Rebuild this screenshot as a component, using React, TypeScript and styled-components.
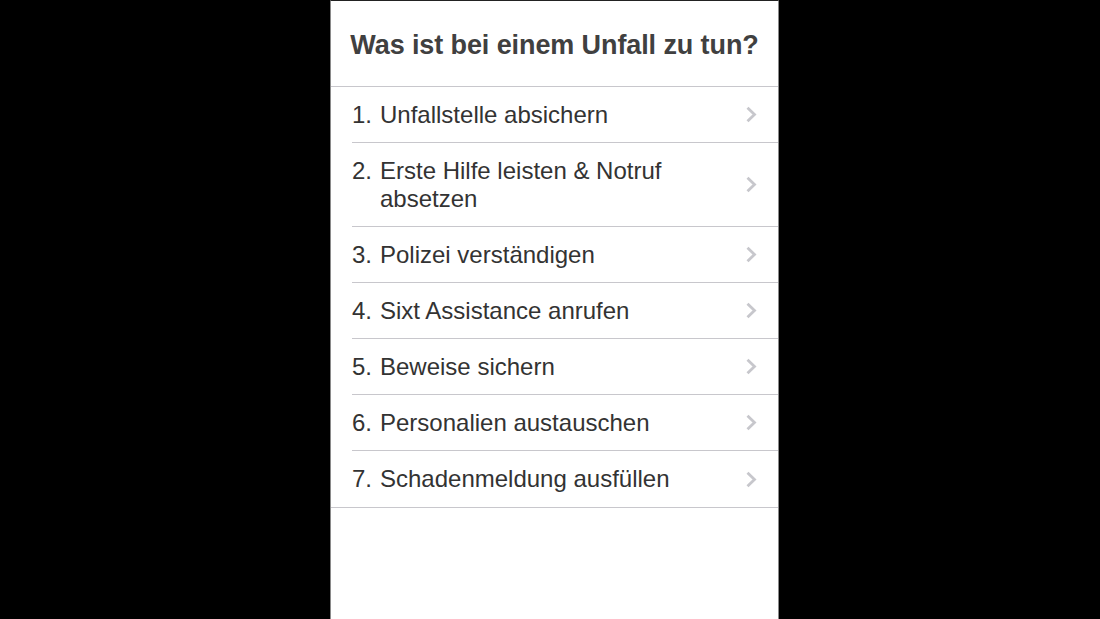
import React from "react";
import styled, { createGlobalStyle } from "styled-components";

const GlobalStyle = createGlobalStyle`
  html, body {
    margin: 0;
    padding: 0;
    background: #000;
    height: 100%;
  }
  #root {
    height: 100%;
  }
`;

const steps = [
  "Unfallstelle absichern",
  "Erste Hilfe leisten & Notruf absetzen",
  "Polizei verständigen",
  "Sixt Assistance anrufen",
  "Beweise sichern",
  "Personalien austauschen",
  "Schadenmeldung ausfüllen",
];

const Stage = styled.div`
  height: 619px;
  display: flex;
  padding-left: 330px;
  background: #000;
`;

const Phone = styled.div`
  width: 449px;
  height: 100%;
  background: #fff;
  border-left: 1px solid #8a8a8a;
  border-right: 1px solid #8a8a8a;
  border-top: 1px solid #222;
  box-sizing: border-box;
  font-family: "Liberation Sans", Arial, sans-serif;
  color: #333;
`;

const Header = styled.h1`
  margin: 0;
  height: 86px;
  padding-top: 3px;
  box-sizing: border-box;
  display: flex;
  align-items: center;
  justify-content: center;
  font-size: 27px;
  font-weight: 700;
  color: #404040;
  border-bottom: 1px solid #c8c7cc;
  letter-spacing: -0.1px;
`;

const List = styled.ul`
  list-style: none;
  margin: 0;
  padding: 0 0 0 21px;
  border-bottom: 1px solid #c8c7cc;
`;

const Row = styled.li<{ $last?: boolean; $tall?: boolean }>`
  display: flex;
  align-items: center;
  height: ${({ $tall }) => ($tall ? "84px" : "56px")};
  padding: 0 20px 0 0;
  box-sizing: border-box;
  border-bottom: ${({ $last }) => ($last ? "none" : "1px solid #c8c7cc")};
  font-size: 24px;
  line-height: 28px;
`;

const Content = styled.div`
  flex: 1;
  display: flex;
  align-items: flex-start;
`;

const Num = styled.span`
  width: 28px;
  flex-shrink: 0;
`;

const Label = styled.span`
  flex: 1;
`;

const Chevron = () => (
  <svg width="13" height="17" viewBox="0 0 13 17" style={{ flexShrink: 0 }}>
    <path
      d="M2.5 1.8 L9.5 8.5 L2.5 15.2"
      fill="none"
      stroke="#c7c7cc"
      strokeWidth="2.8"
    />
  </svg>
);

export default function App() {
  return (
    <Stage>
      <GlobalStyle />
      <Phone>
        <Header>Was ist bei einem Unfall zu tun?</Header>
        <List>
          {steps.map((s, i) => (
            <Row key={s} $tall={i === 1} $last={i === steps.length - 1}>
              <Content>
                <Num>{i + 1}.</Num>
                <Label>
                  {i === 1 ? (
                    <>
                      Erste Hilfe leisten &amp; Notruf
                      <br />
                      absetzen
                    </>
                  ) : (
                    s
                  )}
                </Label>
              </Content>
              <Chevron />
            </Row>
          ))}
        </List>
      </Phone>
    </Stage>
  );
}
